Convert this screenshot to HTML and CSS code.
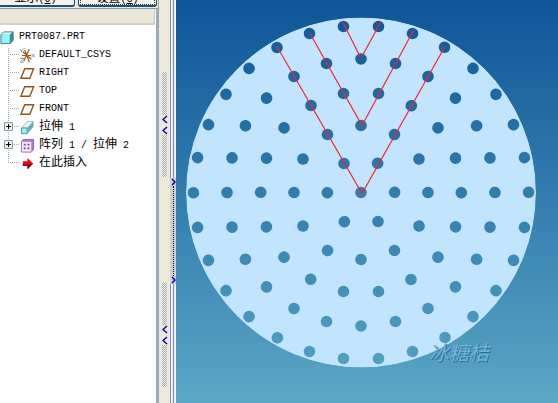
FILE: index.html
```html
<!DOCTYPE html>
<html lang="zh-CN">
<head>
<meta charset="utf-8">
<title>PRT0087.PRT</title>
<link rel="stylesheet" href="styles.css">
</head>
<body>
<div class="app">
  <aside class="navigator">
    <div class="toolbar">
      <button type="button"><span class="han">显示</span>(<u>O</u>)</button>
      <button type="button" class="focused"><span class="han">设置</span>(<u>G</u>)</button>
    </div>
    <div class="tree-panel">
      <div class="tree-header"></div>
      <div class="root row">
        <svg class="icon" viewBox="0 0 16 16"><path d="M1 5l3-3h10v9l-3 3H1z" fill="#2a9a9c"/><path d="M1 5h10v9H1z" fill="#8ff5fa"/><path d="M1 5l3-3h10l-3 3z" fill="#c8ffff"/><path d="M1 5l3-3h10v9l-3 3.500H1zM11 5v9M11 5l3-3" fill="none" stroke="#45777a"/></svg>
        <span>PRT0087.PRT</span>
      </div>
      <ul class="tree">
        <li class="row"><svg class="icon" viewBox="0 0 16 16"><path d="M2 8h10M5 2l5 13M10 1L4 14M3 4l9 8" stroke="#a65a1e" stroke-width="1.300"/><path d="M0 1l2 2 3-3M2 3L1 5M12 6l4 4M16 6l-4 4M0 11h4l-4 4h4" fill="none" stroke="#8a8a8a"/></svg><span>DEFAULT_CSYS</span></li>
        <li class="row"><svg class="icon" viewBox="0 0 16 16"><path d="M5 3h9.500L10.500 13H1z" fill="#fff" stroke="#9c5218" stroke-width="1.500"/></svg><span>RIGHT</span></li>
        <li class="row"><svg class="icon" viewBox="0 0 16 16"><path d="M5 3h9.500L10.500 13H1z" fill="#fff" stroke="#9c5218" stroke-width="1.500"/></svg><span>TOP</span></li>
        <li class="row"><svg class="icon" viewBox="0 0 16 16"><path d="M5 3h9.500L10.500 13H1z" fill="#fff" stroke="#9c5218" stroke-width="1.500"/></svg><span>FRONT</span></li>
        <li class="row"><button type="button" class="expand" aria-label="展开 拉伸 1"></button><svg class="icon" viewBox="0 0 16 16"><path d="M2 8l6-6.500h6V7l-6 7z" fill="#e4f6f6" stroke="#a4b4b4"/><path d="M8 8l6-6.500V7l-6 7z" fill="#5fb0b4"/><path d="M1.500 8.500h6v6h-6z" fill="#9ff4f8" stroke="#4a8c90"/></svg><span><span class="han">拉伸</span> 1</span></li>
        <li class="row"><button type="button" class="expand" aria-label="展开 阵列 1"></button><svg class="icon" viewBox="0 0 16 16"><path d="M1.500 4l2-2.500h11v10.500l-2.500 3H1.500z" fill="#b070d8" stroke="#8a6aa0"/><path d="M2 4h10v10.500H2z" fill="#f4eaff"/><path d="M4 6h2v2H4zM8 6h2v2H8zM4 10h2v2H4zM8 10h2v2H8z" fill="#8a30b8"/></svg><span><span class="han">阵列</span> 1 / <span class="han">拉伸</span> 2</span></li>
        <li class="row"><svg class="icon" viewBox="0 0 16 16"><path d="M3 5.500h5V2l6 6-6 6v-3.500H3z" fill="#e80808"/><path d="M3 9h7l4-1-6 6v-3.500H3z" fill="#780000"/></svg><span class="han">在此插入</span></li>
      </ul>
    </div>
  </aside>
  <div class="splitter">
    <div class="grips">
      <div class="grip"><svg viewBox="0 0 6 20"><path d="M5 1L1 4.500 5 8M5 12L1 15.500 5 19"/></svg></div>
      <div class="grip"><svg viewBox="0 0 6 20"><path d="M5 1L1 4.500 5 8M5 12L1 15.500 5 19"/></svg></div>
    </div>
    <div class="rail">
      <div class="handle"><svg viewBox="0 0 5 8"><path d="M1 1l3 3-3 3"/></svg><i></i><svg viewBox="0 0 5 8"><path d="M1 1l3 3-3 3"/></svg></div>
    </div>
  </div>
  <main class="viewport">
    <svg class="model" viewBox="0 0 382 403" preserveAspectRatio="xMidYMid slice" role="img" aria-label="孔阵列">
      <defs>
        <g id="sector">
          <circle cx="-17" cy="-29" r="5.800"/><circle cx="-33.500" cy="-58" r="5.800"/><circle cx="-50" cy="-87" r="5.800"/><circle cx="-67" cy="-116" r="5.800"/><circle cx="-84" cy="-145" r="5.800"/>
          <circle cx="0" cy="-67" r="5.800"/><circle cx="-17.500" cy="-99" r="5.800"/><circle cx="17.500" cy="-99" r="5.800"/><circle cx="-34.500" cy="-129" r="5.800"/><circle cx="34.500" cy="-129" r="5.800"/><circle cx="-51.500" cy="-159" r="5.800"/><circle cx="51.500" cy="-159" r="5.800"/>
          <circle cx="0" cy="-133.500" r="5.800"/><circle cx="-17.500" cy="-166" r="5.800"/><circle cx="17.500" cy="-166" r="5.800"/>
        </g>
        <mask id="holes" maskUnits="userSpaceOnUse" x="-180" y="-180" width="360" height="360">
          <circle r="175" fill="#fff"/><circle r="5.800"/>
          <use href="#sector"/><use href="#sector" transform="rotate(60)"/><use href="#sector" transform="rotate(120)"/><use href="#sector" transform="rotate(180)"/><use href="#sector" transform="rotate(240)"/><use href="#sector" transform="rotate(300)"/>
        </mask>
      </defs>
      <g transform="translate(185 192.500)">
        <circle r="175" fill="#c2e4ff" mask="url(#holes)"/>
        <path d="M-84-146L1 1 84-146M-51-159L1-67 53-163M-18-170L-1-136M1-136L20-171" fill="none" stroke="#f02828" stroke-width="1.200"/>
      </g>
      <g class="signature"><text x="254" y="361" class="shade">冰糖桔</text><text x="253" y="360">冰糖桔</text></g>
    </svg>
  </main>
</div>
</body>
</html>
```
FILE: styles.css
```css
* { box-sizing: border-box; }
body { margin: 0; background: #ece9d8; color: #000; font: 10px/18px "Liberation Mono", "Noto Sans CJK SC", monospace; }
.han { font-size: 12px; }
.app { display: grid; grid-template-columns: 158px 18px minmax(0, 1fr); height: 100vh; overflow: hidden; }
.navigator { display: flex; flex-direction: column; min-width: 0; }
.toolbar { display: flex; align-items: flex-end; gap: 3px; height: 8px; padding: 0 1px 1px 0; }
.toolbar button { flex: 1; height: 14px; padding: 0; border: 1px solid #1c4e7c; border-bottom-width: 2px; border-radius: 3px; background: #f4f2ea; font: inherit; line-height: 10px; }
.toolbar button:first-child { margin-left: -4px; }
.toolbar .focused { outline: 1px dotted #333; outline-offset: -3px; }
.tree-panel { flex: 1; border-top: 1px solid #7f9db9; border-right: 2px solid #8fb0cc; background: #fff; }
.tree-header { height: 16px; margin: 0 1px 3px 0; border-right: 1px solid #c8c4b0; border-bottom: 2px solid #d6d2c2; background: #ebe8d9; }
.row { display: flex; align-items: center; gap: 4px; height: 18px; white-space: pre; }
.icon { width: 15px; height: 15px; flex: none; }
.tree { position: relative; margin: 0; padding: 0; list-style: none; }
.tree::before { content: ""; position: absolute; left: 8px; top: 2px; bottom: 9px; border-left: 1px dotted #aaa; }
.tree .row { position: relative; padding-left: 20px; }
.tree .row::before { content: ""; position: absolute; left: 8px; top: 8px; width: 11px; border-top: 1px dotted #aaa; }
.expand { position: absolute; z-index: 1; left: 4px; top: 4px; width: 9px; height: 9px; padding: 0; border: 1px solid #7b98b5; border-radius: 1px; background: linear-gradient(#000, #000) center / 5px 1px no-repeat, linear-gradient(#000, #000) center / 1px 5px no-repeat, #f4f2ea; }
.splitter { display: grid; grid-template-columns: 11px 6px; background: #ece9d8; border-left: 1px solid #aca899; }
.grips { display: flex; flex-direction: column; gap: 105px; align-items: center; padding-top: 72px; }
.grip { display: grid; place-items: center; flex: none; width: 5px; height: 105px; background: repeating-conic-gradient(#aaa 0 25%, #eee 0 50%) 0 0 / 2px 2px; }
.splitter svg { fill: none; stroke: #0000c8; stroke-width: 1.500; }
.grip svg { width: 6px; height: 20px; background: #ece9d8; }
.rail { padding-top: 178px; background: linear-gradient(90deg, #7090e4 0 1px, #fff 1px 2px, #ece9d8 2px 3px, #7090e4 3px 4px, #ece9d8 4px 5px, #fff 5px); }
.handle { display: flex; flex-direction: column; align-items: center; height: 106px; background: #d4d0c8; }
.handle svg { width: 5px; height: 8px; flex: none; }
.handle i { flex: 1; border-left: 1px dotted #0000a0; }
.viewport { min-width: 0; min-height: 0; background: linear-gradient(#0e5598, #5aa7c6); }
.model { display: block; width: 100%; height: 100%; }
.signature { font: italic 20px "Noto Sans CJK SC", sans-serif; fill: #72b4d6; }
.signature .shade { fill: #28719c; }
```
